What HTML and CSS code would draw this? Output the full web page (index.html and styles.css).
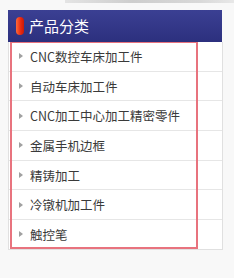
FILE: index.html
```html
<!DOCTYPE html>
<html lang="zh-CN">
<head>
  <meta charset="UTF-8">
  <title>产品分类</title>
  <link rel="stylesheet" href="styles.css">
</head>
<body>

  <div class="top-strip"></div>

  <div class="sidebar">
    <div class="sidebar-head">
      <span class="pill"></span>
      <h3>产品分类</h3>
    </div>
    <ul class="cat-list">
      <li><a href="#">CNC数控车床加工件</a></li>
      <li><a href="#">自动车床加工件</a></li>
      <li><a href="#">CNC加工中心加工精密零件</a></li>
      <li><a href="#">金属手机边框</a></li>
      <li><a href="#">精铸加工</a></li>
      <li><a href="#">冷镦机加工件</a></li>
      <li><a href="#">触控笔</a></li>
    </ul>
    <div class="edit-frame"></div>
  </div>

</body>
</html>
```

FILE: styles.css
```css
body {
  margin: 0;
  background: #f8f8f8;
  font-family: "Noto Sans CJK SC", "Liberation Sans", sans-serif;
  color: #333;
}

.top-strip {
  height: 3px;
  margin-left: 65px;
  background: linear-gradient(90deg, #e4e4e4, #cdcdcd 40%, #d8d8d8 80%, #e8e8e8);
}

.sidebar {
  position: relative;
  width: 215px;
  margin: 7px 0 0 8px;
}

.sidebar-head {
  height: 32px;
  width: 214px;
  display: flex;
  align-items: center;
  background: linear-gradient(#3b4093, #2c307e);
}

.pill {
  width: 8px;
  height: 18px;
  margin-left: 8px;
  margin-right: 5px;
  border-radius: 4px;
  background: linear-gradient(90deg, #ff6a3a, #e8280f 60%, #c81a08);
}

.sidebar-head h3 {
  margin: 0;
  font-size: 15px;
  font-weight: normal;
  color: #fff;
  line-height: 32px;
}

.cat-list {
  list-style: none;
  margin: 0;
  padding: 0;
  background: #fff;
  border: 1px solid #e0e0e0;
  border-top: 0;
}

.cat-list li {
  height: 28.7px;
  display: flex;
  align-items: center;
  border-bottom: 1px solid #e6e6e6;
}

.cat-list li:last-child {
  border-bottom: 0;
}

.cat-list li::before {
  content: '';
  margin-left: 10px;
  margin-right: 7px;
  border-left: 4px solid #a0a0a0;
  border-top: 3.5px solid transparent;
  border-bottom: 3.5px solid transparent;
}

.cat-list a {
  font-size: 12.5px;
  color: #3a3a3a;
  text-decoration: none;
}

.edit-frame {
  position: absolute;
  left: 2px;
  top: 32px;
  width: 188px;
  height: 207px;
  box-sizing: border-box;
  border: 2px solid #e8737e;
  border-top: 1px solid #e8737e;
  pointer-events: none;
}
```
